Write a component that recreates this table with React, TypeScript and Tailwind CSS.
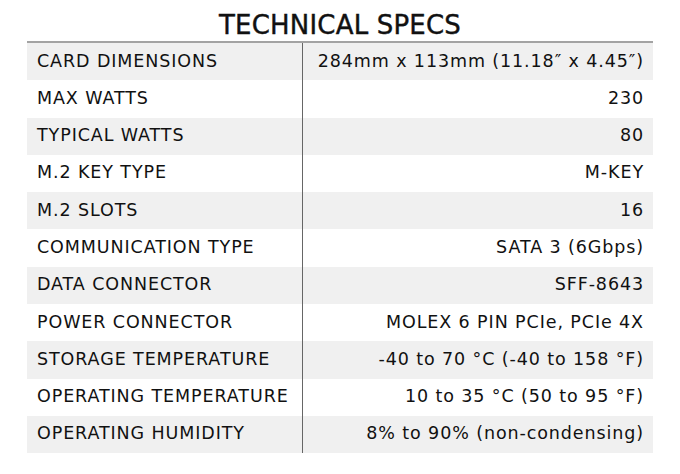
const specs: [string, string][] = [
  ["CARD DIMENSIONS", "284mm x 113mm (11.18\u2033 x 4.45\u2033)"],
  ["MAX WATTS", "230"],
  ["TYPICAL WATTS", "80"],
  ["M.2 KEY TYPE", "M-KEY"],
  ["M.2 SLOTS", "16"],
  ["COMMUNICATION TYPE", "SATA 3 (6Gbps)"],
  ["DATA CONNECTOR", "SFF-8643"],
  ["POWER CONNECTOR", "MOLEX 6 PIN PCIe, PCIe 4X"],
  ["STORAGE TEMPERATURE", "-40 to 70 \u00b0C (-40 to 158 \u00b0F)"],
  ["OPERATING TEMPERATURE", "10 to 35 \u00b0C (50 to 95 \u00b0F)"],
  ["OPERATING HUMIDITY", "8% to 90% (non-condensing)"],
];

export default function App() {
  return (
    <div className="w-[680px] h-[474px] bg-white text-[#111] font-['DejaVu_Sans',sans-serif]">
      <h1 className="h-[41px] flex items-end justify-center pb-[3px] text-[26px] leading-none tracking-[0.2px] [-webkit-text-stroke:0.4px_#111]">
        TECHNICAL SPECS
      </h1>
      <div className="mx-[27px] border-t-2 border-[#a3a3a3]">
        {specs.map(([label, value], i) => (
          <div
            key={label}
            className={`flex h-[37.3px] text-[17.5px] tracking-[0.9px] ${i % 2 === 0 ? "bg-[#f0f0f0]" : "bg-white"}`}
          >
            <div className="w-[276px] flex items-center pl-[10px] pb-[2px] border-r border-[#666]">{label}</div>
            <div className="flex-1 flex items-center justify-end pr-[9px] pb-[2px]">{value}</div>
          </div>
        ))}
      </div>
    </div>
  );
}
